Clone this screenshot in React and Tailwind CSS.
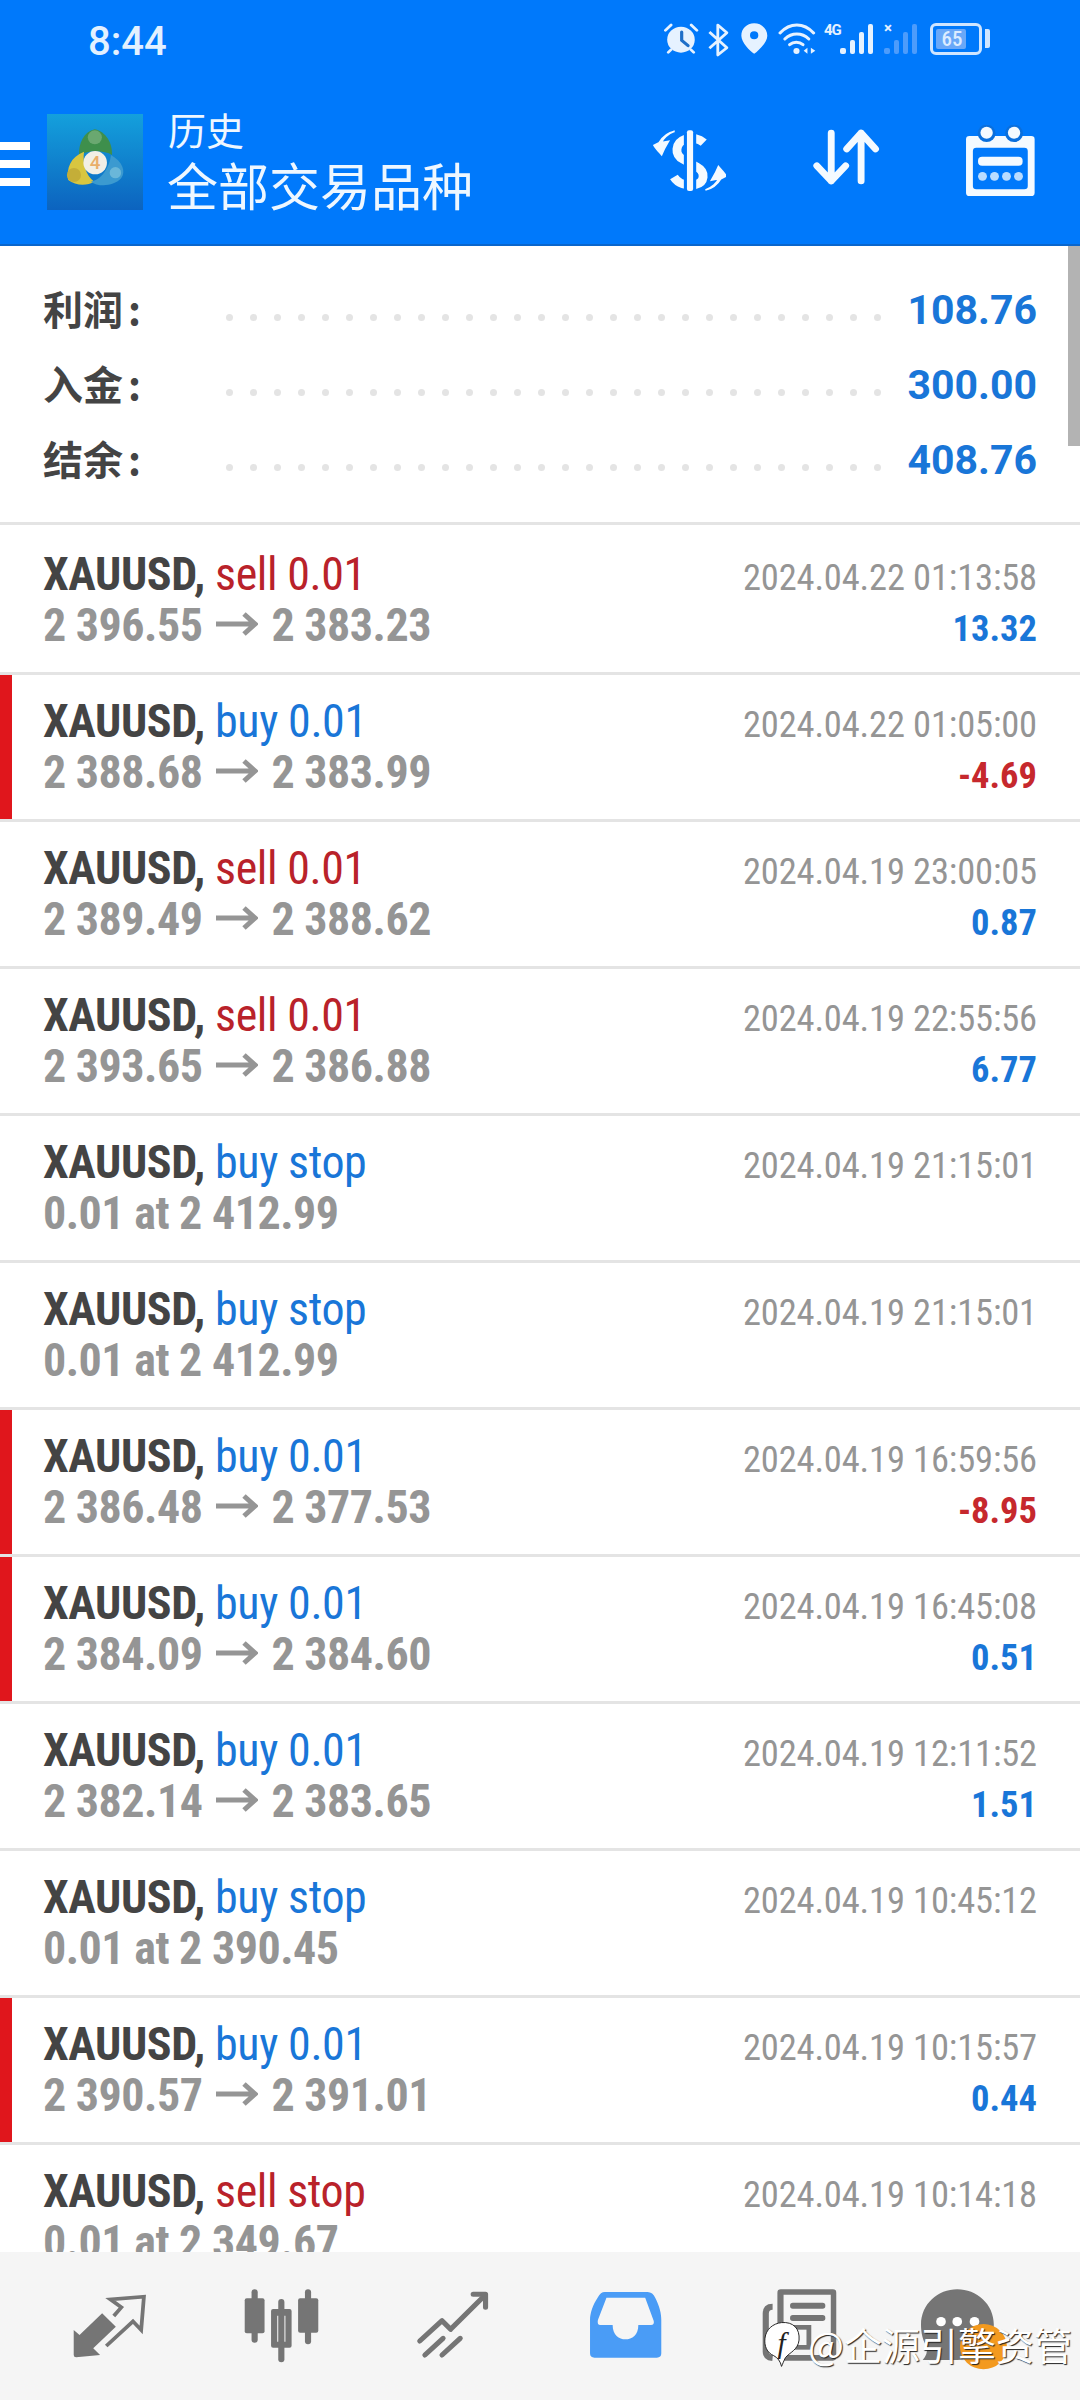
const C = "#757575";

function Logo() {
  return (
    <svg width="96" height="96" viewBox="55 42 285 288" preserveAspectRatio="none" className="ml-[17px] shrink-0">
      <defs>
        <linearGradient id="lg" x1="0" y1="0" x2="0" y2="1">
          <stop offset="0" stopColor="#14a0dc" />
          <stop offset="1" stopColor="#0c63bf" />
        </linearGradient>
      </defs>
      <rect x="55" y="42" width="285" height="288" fill="url(#lg)" />
      <path d="M197 88C165 95 148 130 150 168C170 150 225 150 248 165C250 130 230 95 197 88Z" fill="#3e8f4c" />
      <circle cx="197" cy="112" r="21" fill="#6aa870" />
      <path d="M165 155C125 170 112 205 118 240C140 258 175 258 195 245C170 225 160 190 165 155Z" fill="#d8c640" />
      <circle cx="135" cy="225" r="21" fill="#c4ae38" />
      <path d="M245 165C280 185 290 215 275 235C250 262 205 260 185 245C215 240 240 205 245 165Z" fill="#3b9ad0" />
      <circle cx="258" cy="218" r="17" fill="#6ab7d9" />
      <circle cx="198" cy="188" r="35" fill="#f2efe6" />
      <text x="198" y="208" textAnchor="middle" fontSize="56" fontFamily="Roboto" fontWeight="500" fill="#e9ae6a">4</text>
    </svg>
  );
}

function Hamburger() {
  return (
    <div className="flex flex-col gap-[10px] shrink-0">
      <div className="w-[30px] h-[8px] bg-white" />
      <div className="w-[30px] h-[8px] bg-white" />
      <div className="w-[30px] h-[8px] bg-white" />
    </div>
  );
}

function DollarIcon() {
  const arrow = "M390 398C370 405 355 420 352 432L372 428C362 445 355 460 352 468C345 460 335 450 330 440L345 432C355 415 370 402 390 398Z";
  return (
    <svg width="74" height="68" viewBox="324 388 216 204" preserveAspectRatio="none" className="shrink-0 mt-[3px]">
      <path d="M475 432C462 420 440 415 420 422C392 432 388 470 415 482L455 505C482 520 478 552 450 558C425 562 400 555 388 535" fill="none" stroke="#f4faff" strokeWidth="26" />
      <rect x="417" y="395" width="36" height="185" fill="#0079fb" />
      <rect x="426" y="395" width="18" height="182" rx="6" fill="#f4faff" />
      <path d={arrow} fill="#f4faff" stroke="#f4faff" strokeWidth="5" />
      <path d={arrow} fill="#f4faff" stroke="#f4faff" strokeWidth="5" transform="rotate(180 435 486)" />
    </svg>
  );
}

function ArrowsIcon() {
  return (
    <svg width="68" height="60" viewBox="789 399 198 180" preserveAspectRatio="none" className="shrink-0 ml-[86px] mt-[3px]">
      <g fill="none" stroke="#f4faff" strokeWidth="20" strokeLinecap="round" strokeLinejoin="round">
        <path d="M845 414V558M803 512L845 558L887 512" />
        <path d="M932 558V414M890 462L932 414L974 462" />
      </g>
    </svg>
  );
}

function CalendarIcon() {
  return (
    <svg width="71" height="72" viewBox="1234 372 207 216" preserveAspectRatio="none" className="shrink-0 ml-[85px]">
      <rect x="1237" y="405" width="200" height="180" rx="10" fill="#f4faff" />
      <circle cx="1297" cy="397" r="26" fill="#0a6fdc" />
      <circle cx="1377" cy="397" r="26" fill="#0a6fdc" />
      <circle cx="1297" cy="395" r="18" fill="#f4faff" />
      <circle cx="1377" cy="395" r="18" fill="#f4faff" />
      <rect x="1257" y="440" width="160" height="125" rx="10" fill="#0079fb" />
      <rect x="1272" y="467" width="130" height="27" rx="12" fill="#f4faff" />
      {[1285, 1320, 1355, 1390].map((x) => (
        <circle key={x} cx={x} cy="526" r="13" fill="#b9dcff" />
      ))}
    </svg>
  );
}

function Signal({ c }) {
  return (
    <div className="flex items-end gap-[4px] h-[31px] shrink-0">
      <div className="w-[6px] h-[6px] rounded-[2px]" style={{ background: c }} />
      <div className="w-[5px] h-[14px] rounded-[2px]" style={{ background: c }} />
      <div className="w-[5px] h-[22px] rounded-[2px]" style={{ background: c }} />
      <div className="w-[5px] h-[30px] rounded-[2px]" style={{ background: c }} />
    </div>
  );
}

function StatusIcons() {
  const c = "#e6f2ff";
  return (
    <div className="ml-auto mr-[90px] flex items-start h-[36px]">
      <svg width="35" height="33" viewBox="358 70 99 99" preserveAspectRatio="none" className="shrink-0">
        <circle cx="406" cy="120" r="39" fill={c} />
        <path d="M408 97V122L426 138" fill="none" stroke="#1f6fc8" strokeWidth="9" strokeLinecap="round" />
        <path d="M362 92L378 76M451 92L435 76M370 158L378 150M442 158L434 150" stroke={c} strokeWidth="8" strokeLinecap="round" />
      </svg>
      <svg width="21" height="34" viewBox="488 68 60 102" preserveAspectRatio="none" className="shrink-0 ml-[9px]">
        <path d="M492 95L542 142L516 164V74L542 97L492 144" fill="none" stroke={c} strokeWidth="8" strokeLinejoin="round" />
      </svg>
      <svg width="27" height="31" viewBox="584 74 78 93" preserveAspectRatio="none" className="shrink-0 ml-[12px]">
        <path fillRule="evenodd" d="M622 75C600 75 585 92 585 112C585 132 610 158 622 166C634 158 660 132 660 112C660 92 644 75 622 75ZM622 99A12 12 0 1 1 622 123A12 12 0 0 1 622 99Z" fill={c} />
      </svg>
      <svg width="38" height="32" viewBox="690 70 111 96" preserveAspectRatio="none" className="shrink-0 ml-[10px]">
        <g fill="none" stroke={c} strokeWidth="9" strokeLinecap="round">
          <path d="M696 100C725 68 765 68 794 100" />
          <path d="M710 118C730 98 760 98 780 118" />
          <path d="M724 135C735 125 752 125 763 135" />
        </g>
        <circle cx="744" cy="154" r="9" fill={c} />
        <path d="M776 144V162L765 153ZM786 144V162L799 153Z" fill={c} />
      </svg>
      <div className="shrink-0 ml-[8px] w-[16px] h-[14px] text-[15px] leading-[14px] font-bold tracking-[-1px] text-[#e6f2ff]">4G</div>
      <Signal c={c} />
      <div className="relative shrink-0 ml-[11px]">
        <Signal c="#4d9cfb" />
        <div className="absolute left-0 top-[-2px] text-[15px] leading-[14px] font-bold text-[#e6f2ff]">×</div>
      </div>
      <div className="ml-[13px] w-[52px] h-[32px] rounded-[6px] border-[3px] border-[#cfe5ff] p-[3px] relative shrink-0">
        <div className="w-[30px] h-full bg-[#6aa8f8] rounded-[2px]" />
        <div className="absolute inset-0 flex items-center justify-center pr-[8px] text-[21px] font-medium leading-none text-[#dcecff] font-stretch-condensed">65</div>
      </div>
      <div className="ml-[3px] mt-[6px] w-[5px] h-[19px] bg-[#cfe5ff] rounded-r-[2px] shrink-0" />
    </div>
  );
}

function Header() {
  return (
    <header className="h-[246px] shrink-0 bg-[#0079fb] border-b-[2px] border-[#0a66cc] flex flex-col">
      <div className="h-[114px] flex pt-[23px] text-white">
        <span className="ml-[88px] text-[40px] leading-[38px] font-medium text-[#e3f1ff]">8:44</span>
        <StatusIcons />
      </div>
      <div className="flex items-start">
        <div className="mt-[28px]"><Hamburger /></div>
        <Logo />
        <div className="ml-[24px] flex flex-col text-[#eef7ff] font-['Noto_Sans_CJK_SC','Roboto',sans-serif]">
          <span className="text-[38px] leading-[40px] -mt-[5px] ml-[1px]">历史</span>
          <span className="text-[51px] leading-[60px] mt-[5px] whitespace-nowrap">全部交易品种</span>
        </div>
        <div className="ml-auto mr-[44px] flex items-start pt-[11px]">
          <DollarIcon />
          <ArrowsIcon />
          <CalendarIcon />
        </div>
      </div>
    </header>
  );
}

function SummaryRow({ label, value }) {
  return (
    <div className="h-[75px] flex items-center">
      <span className="w-[183px] -mt-[6px] shrink-0 text-[40px] font-bold text-[#444] font-['Noto_Sans_CJK_SC',sans-serif] leading-none">
        {label}<span className="ml-[5px]">:</span>
      </span>
      <div className="flex justify-between w-[655px] shrink-0 mt-[14px]">
        {Array.from({ length: 28 }).map((_, i) => (
          <div key={i} className="w-[7px] h-[7px] rounded-full bg-[#e4e4e4]" />
        ))}
      </div>
      <span className="ml-auto text-[41px] font-bold text-[#1976d8] leading-none">{value}</span>
    </div>
  );
}

function Summary() {
  return (
    <section className="h-[279px] shrink-0 pt-[27px] pl-[43px] pr-[43px] border-b-[3px] border-[#e4e4e4]">
      <SummaryRow label="利润" value="108.76" />
      <SummaryRow label="入金" value="300.00" />
      <SummaryRow label="结余" value="408.76" />
    </section>
  );
}

const rows = [
  { a: "sell 0.01", p: "2 396.55", q: "2 383.23", d: "2024.04.22 01:13:58", v: "13.32", first: true },
  { a: "buy 0.01", p: "2 388.68", q: "2 383.99", d: "2024.04.22 01:05:00", v: "-4.69", bar: true },
  { a: "sell 0.01", p: "2 389.49", q: "2 388.62", d: "2024.04.19 23:00:05", v: "0.87" },
  { a: "sell 0.01", p: "2 393.65", q: "2 386.88", d: "2024.04.19 22:55:56", v: "6.77" },
  { a: "buy stop", t: "0.01 at 2 412.99", d: "2024.04.19 21:15:01" },
  { a: "buy stop", t: "0.01 at 2 412.99", d: "2024.04.19 21:15:01" },
  { a: "buy 0.01", p: "2 386.48", q: "2 377.53", d: "2024.04.19 16:59:56", v: "-8.95", bar: true },
  { a: "buy 0.01", p: "2 384.09", q: "2 384.60", d: "2024.04.19 16:45:08", v: "0.51", bar: true },
  { a: "buy 0.01", p: "2 382.14", q: "2 383.65", d: "2024.04.19 12:11:52", v: "1.51" },
  { a: "buy stop", t: "0.01 at 2 390.45", d: "2024.04.19 10:45:12" },
  { a: "buy 0.01", p: "2 390.57", q: "2 391.01", d: "2024.04.19 10:15:57", v: "0.44", bar: true },
  { a: "sell stop", t: "0.01 at 2 349.67", d: "2024.04.19 10:14:18" },
];

function PriceArrow() {
  return (
    <svg width="42" height="24" viewBox="0 0 42 24" className="inline-block ml-[14px] mr-[13px] align-[5px]">
      <path d="M0 12H39M28 2L39 12L28 22" fill="none" stroke="#959595" strokeWidth="5" />
    </svg>
  );
}

function Row({ r }) {
  const sell = r.a.startsWith("sell");
  const neg = r.v && r.v.startsWith("-");
  return (
    <div className={`${r.first ? "h-[150px] pt-[24px]" : "h-[147px] pt-[21px]"} shrink-0 border-b-[3px] border-[#e4e4e4] relative pl-[43px] pr-[43px] font-stretch-condensed`}>
      {r.bar && <div className="absolute left-0 top-0 bottom-0 w-[12px] bg-[#e0161c]" />}
      <div className="flex justify-between items-baseline h-[50px] leading-[50px]">
        <span className="text-[46px] tracking-[-0.4px] whitespace-pre">
          <b className="font-bold text-[#444]">XAUUSD,</b>{" "}
          <span className={sell ? "text-[#b9222a]" : "text-[#1976d8]"}>{r.a}</span>
        </span>
        <span className="text-[36.5px] tracking-[-0.15px] text-[#959595]">{r.d}</span>
      </div>
      <div className="flex justify-between items-baseline h-[52px] leading-[52px]">
        <span className="text-[46px] tracking-[-0.5px] font-bold text-[#959595] whitespace-pre">
          {r.t ? r.t : (<>{r.p}<PriceArrow />{r.q}</>)}
        </span>
        {r.v && <span className={`text-[36.5px] font-bold ${neg ? "text-[#c6282d]" : "text-[#1976d8]"}`}>{r.v}</span>}
      </div>
    </div>
  );
}

function NavIcons() {
  return (
    <div className="flex items-start pt-[28px]">
      <svg width="75" height="92" viewBox="210 180 219 276" preserveAspectRatio="none" className="shrink-0 ml-[72px]">
        <path d="M215 330L232 345L298 280L338 320L272 385L292 405L222 412Q215 412 215 405Z" fill={C} />
        <path d="M332 288L354 262L322 238L420 230L412 330L388 304L310 378" fill="none" stroke={C} strokeWidth="11" />
      </svg>
      <svg width="77" height="92" viewBox="705 180 225 276" preserveAspectRatio="none" className="shrink-0 ml-[96px]">
        <rect x="730" y="208" width="18" height="160" rx="9" fill={C} />
        <rect x="710" y="235" width="58" height="105" rx="6" fill={C} />
        <rect x="808" y="237" width="18" height="190" rx="9" fill={C} />
        <path fillRule="evenodd" d="M793 267H841Q847 267 847 273V377Q847 383 841 383H793Q787 383 787 377V273Q787 267 793 267ZM805 287V365H829V287Z" fill={C} />
        <rect x="886" y="208" width="18" height="165" rx="9" fill={C} />
        <rect x="866" y="235" width="59" height="103" rx="6" fill={C} />
      </svg>
      <svg width="74" height="92" viewBox="1209 180 216 276" preserveAspectRatio="none" className="shrink-0 ml-[96px]">
        <g fill="none" stroke={C} strokeWidth="15" strokeLinecap="round" strokeLinejoin="round">
          <path d="M1220 363L1285 302L1310 328L1408 228" />
          <path d="M1376 223H1412V262" />
          <path d="M1235 405L1288 355" />
          <path d="M1285 405L1338 355" />
        </g>
      </svg>
      <svg width="74" height="92" viewBox="144 180 216 276" preserveAspectRatio="none" className="shrink-0 ml-[99px]">
        <path d="M190 216H315Q330 216 338 235C350 260 355 280 355 300V400Q355 413 342 413H160Q147 413 147 400V300C147 280 155 255 170 232Q178 216 190 216Z" fill="#4a9cf6" />
        <path d="M195 233H308L333 303Q335 315 325 315H288C288 345 270 358 250 358C232 358 213 345 213 315H177Q167 315 170 300Z" fill="#f5f5f5" />
      </svg>
      <svg width="77" height="92" viewBox="645 180 225 276" preserveAspectRatio="none" className="shrink-0 ml-[99px]">
        <path fillRule="evenodd" d="M700 208H852Q862 208 862 218V412Q862 422 852 422H700Q690 422 690 412V218Q690 208 700 208ZM708 224V405H846V224Z" fill={C} />
        <path d="M676 260Q656 260 656 280V395Q656 412 676 414" fill="none" stroke={C} strokeWidth="18" />
        <rect x="727" y="248" width="103" height="18" rx="8" fill={C} />
        <rect x="727" y="285" width="103" height="18" rx="8" fill={C} />
        <rect x="722" y="322" width="60" height="60" fill="none" stroke={C} strokeWidth="14" />
      </svg>
      <svg width="88" height="92" viewBox="1107 180 255 276" preserveAspectRatio="none" className="shrink-0 ml-[82px]">
        <path d="M1212 208C1268 208 1318 252 1318 314C1318 370 1270 418 1212 420H1112C1122 408 1126 396 1124 380C1112 362 1107 338 1107 314C1107 252 1156 208 1212 208Z" fill={C} />
        <circle cx="1165" cy="305" r="14" fill="#fff" />
        <circle cx="1212" cy="305" r="14" fill="#fff" />
        <circle cx="1262" cy="305" r="14" fill="#fff" />
        <circle cx="1288" cy="380" r="68" fill="#f39a1f" />
      </svg>
    </div>
  );
}

function Watermark() {
  return (
    <div className="absolute left-[764px] top-[2320px] flex items-center">
      <svg width="37" height="48" viewBox="0 0 38 48" className="shrink-0">
        <path d="M18 2C30 1 37 8 36 20C35 30 26 33 22 38C20 42 19 45 18 47C17 42 14 38 10 36C3 33 0 26 1 18C2 9 9 3 18 2Z" fill="#fff" stroke="#222" strokeWidth="1" />
        <text x="18" y="33" textAnchor="middle" fontSize="30" fontStyle="italic" fontFamily="Liberation Serif" fill="#222">f</text>
      </svg>
      <span className="ml-[7px] text-[38px] leading-[40px] text-white whitespace-nowrap font-['Noto_Sans_CJK_SC',sans-serif] [text-shadow:1px_1px_1px_#222]">@企源引擎资管</span>
    </div>
  );
}

export default function App() {
  return (
    <div className="relative w-[1080px] h-[2400px] overflow-hidden bg-white flex flex-col font-['Roboto','Noto_Sans_CJK_SC',sans-serif]">
      <Header />
      <main className="flex-1 min-h-0 overflow-hidden relative">
        <div className="absolute right-0 top-0 w-[12px] h-[200px] bg-[#b3b3b3]" />
        <Summary />
        {rows.map((r, i) => (
          <Row key={i} r={r} />
        ))}
      </main>
      <nav className="h-[148px] shrink-0 bg-[#f5f5f5]">
        <NavIcons />
      </nav>
      <Watermark />
    </div>
  );
}
